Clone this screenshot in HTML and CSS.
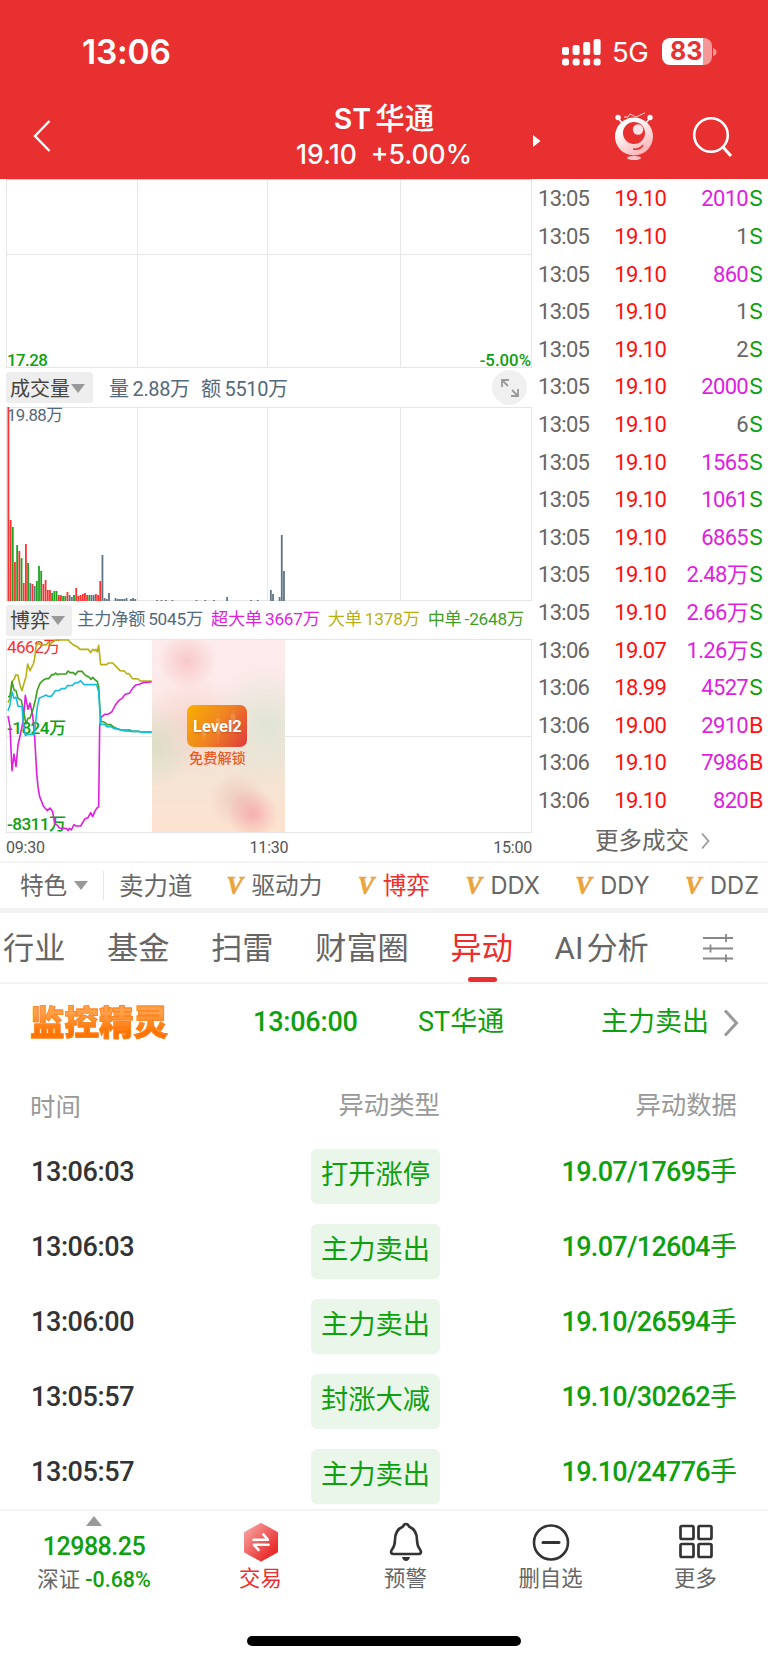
FILE: index.html
```
<!DOCTYPE html>
<html lang="zh-CN">
<head>
  <meta charset="UTF-8" />
  <meta name="viewport" content="width=device-width, initial-scale=1.0"/>
  <title>ST华通</title>
  <link rel="stylesheet" href="styles.css">
</head>
<body>
  <div class="header">
    <div class="status">
      <span class="clock">13:06</span>
      <svg class="signal" width="40" height="28" viewBox="0 0 40 28" fill="#fff">
        <rect x="0" y="9" width="7" height="8" rx="2"/><rect x="10.6" y="7" width="7" height="10" rx="2"/>
        <rect x="21.2" y="4" width="7" height="13" rx="2"/><rect x="31.6" y="1" width="7" height="16" rx="2"/>
        <rect x="0" y="20.5" width="7" height="7" rx="2.5"/><rect x="10.6" y="20.5" width="7" height="7" rx="2.5"/>
        <rect x="21.2" y="20.5" width="7" height="7" rx="2.5"/><rect x="31.6" y="20.5" width="7" height="7" rx="2.5"/>
      </svg>
      <span class="network">5G</span>
      <div class="battery"><span>83</span></div>
      <svg class="battery-tip" width="4" height="10"><path d="M0 1Q3.5 2 3.5 5T0 9Z" fill="#f49797"/></svg>
    </div>
    <div class="navbar">
      <svg class="back" width="20" height="36" viewBox="0 0 20 36"><path d="M17.500 3L3 18L17.500 33" fill="none" stroke="#fff" stroke-width="2.400"/></svg>
      <div class="title">
        <div class="name">ST<span>华通</span></div>
        <div class="quote"><span>19.10</span><span>+5.00%</span></div>
      </div>
      <svg class="next" width="8" height="12"><path d="M0 0L7.500 6L0 12Z" fill="#fff"/></svg>
      <svg class="robot" width="40" height="50" viewBox="0 0 40 50">
        <defs>
          <linearGradient id="face" x1="0" y1="0" x2=".6" y2="1"><stop offset=".3" stop-color="#fff"/><stop offset="1" stop-color="#fbb5b8"/></linearGradient>
        </defs>
        <path d="M4 6L9 12M36 6L31 12" stroke="#fff" stroke-width="1.500"/>
        <circle cx="4" cy="5.500" r="2.700" fill="#fff"/><circle cx="36" cy="5.500" r="2.700" fill="#fff"/>
        <path d="M10 5L14 5L16 2L22 5L31 .8" fill="none" stroke="#ffd0d0" stroke-width="1"/>
        <circle cx="20" cy="24.500" r="19" fill="url(#face)"/>
        <circle cx="20" cy="21" r="11" fill="#e93030"/>
        <circle cx="24" cy="17.500" r="5.200" fill="#ffe3e4"/>
        <path d="M19 37Q26 38 29 33" fill="none" stroke="#e93030" stroke-width="1.500"/>
        <ellipse cx="20" cy="46" rx="7" ry="2" fill="#fbc5c7"/>
      </svg>
      <svg class="search" width="42" height="42" viewBox="0 0 42 42" fill="none" stroke="#fff"><circle cx="19" cy="19" r="16.800" stroke-width="2.600"/><path d="M30.500 30.500L39 40" stroke-width="3"/></svg>
    </div>
  </div>

  <div class="main">
    <div class="charts">
      <div class="chart price">
        <span class="low green">17.28</span>
        <span class="low green">-5.00%</span>
      </div>
      <div class="toolbar">
        <button class="select">成交量<i></i></button>
        <span class="vol">量<b>2.88</b>万</span>
        <span class="amount">额<b>5510</b>万</span>
        <div class="expand">
          <svg width="20" height="20" viewBox="0 0 20 20" fill="none" stroke="#999" stroke-width="1.800"><path d="M2 9V2H9M2 2L8 8M18 11V18H11M18 18L12 12"/></svg>
        </div>
      </div>
      <div class="chart volume">
        <svg id="bars" width="526" height="194"></svg>
        <span>19.88万</span>
      </div>
      <div class="toolbar indicator">
        <button class="select">博弈<i></i></button>
        <span class="c1">主力净额<b>5045</b>万</span>
        <span class="c2">超大单<b>3667</b>万</span>
        <span class="c3">大单<b>1378</b>万</span>
        <span class="c4">中单<b>-2648</b>万</span>
      </div>
      <div class="chart game">
        <span class="top">4662万</span>
        <span class="mid">-1824万</span>
        <span class="bottom">-8311万</span>
        <svg class="lines" width="526" height="193" viewBox="18 27 1578 579" fill="none" stroke-width="4.800" stroke-linejoin="round">
          <polyline stroke="#b8b010" points="24,218 30,205 36,155 42,148 48,134 54,136 60,165 66,182 72,160 78,140 83,102 90,122 100,102 104,85 108,50 115,38 122,46 140,44 145,36 150,42 158,36 168,30 205,30 212,38 222,46 232,50 240,58 265,58 272,68 278,58 284,62 288,58 292,66 296,46 302,104 320,104 325,99 338,99 348,109 360,122 373,123 380,131 387,131 397,146 415,147 420,153 455,153"/>
          <polyline stroke="#e01ee0" points="24,258 30,290 36,422 42,372 48,410 54,345 64,300 70,270 76,196 84,238 90,219 98,255 104,320 110,430 114,470 119,500 130,528 142,542 150,534 158,545 164,580 172,586 178,594 200,596 204,602 208,595 214,600 222,584 228,588 242,588 255,566 264,563 272,548 278,560 284,545 290,535 296,530 299,290 303,262 314,253 326,252 336,245 346,225 356,212 366,205 376,193 388,190 398,175 406,166 420,162 432,157 445,157 455,155"/>
          <polyline stroke="#3c9f1e" points="24,200 30,200 36,155 42,180 48,182 54,205 64,211 72,250 78,282 84,265 90,264 100,235 106,210 112,180 120,160 130,150 138,146 146,146 155,134 162,134 167,129 172,134 178,132 198,132 204,123 210,128 220,128 226,134 234,124 246,124 252,132 258,137 268,142 272,148 278,142 284,148 292,155 296,170 300,240 302,274 312,276 322,284 332,284 342,292 352,296 362,300 390,300 396,304 415,304 422,306 455,306"/>
          <polyline stroke="#14bede" points="24,242 30,225 36,185 42,205 48,202 54,228 66,230 70,280 76,317 84,313 102,313 106,285 112,230 118,204 128,200 138,195 144,199 154,199 166,182 178,181 184,176 196,176 202,167 218,166 224,159 234,158 242,152 252,164 290,164 296,185 300,250 302,283 314,283 320,290 332,290 342,296 358,298 368,302 395,304 415,304 425,307 455,307"/>
        </svg>
        <div class="lock">
          <div class="level">
            <svg width="60" height="43"><path d="M17 17V36M31 8V38M46 5V25M15 24H19V30H15ZM29 14H33V28H29ZM44 10H48V20H44Z" stroke="#fff" stroke-opacity=".12" fill="#fff" fill-opacity=".1"/></svg>
            <span>Level2</span>
          </div>
          <p>免费解锁</p>
        </div>
      </div>
      <div class="axis"><span>09:30</span><span>11:30</span><span>15:00</span></div>
    </div>

    <div class="trades">
      <div id="tradeList"></div>
      <div class="more">更多成交<svg width="9" height="18" viewBox="0 0 9 18"><path d="M1 1.500L7.500 9L1 16.500" fill="none" stroke="#999" stroke-width="1.800"/></svg></div>
    </div>
  </div>

  <div class="features">
    <div class="kind">特色<i></i></div>
    <span class="plain">卖力道</span>
    <span><em>V</em>驱动力</span>
    <span class="on"><em>V</em>博弈</span>
    <span><em>V</em>DDX</span>
    <span><em>V</em>DDY</span>
    <span><em>V</em>DDZ</span>
  </div>

  <div class="tabs">
    <span>行业</span>
    <span>基金</span>
    <span>扫雷</span>
    <span>财富圈</span>
    <span class="on">异动</span>
    <span>AI<u>分析</u></span>
    <svg width="31" height="28" viewBox="0 0 31 28" stroke="#888" stroke-width="1.800"><path d="M0 4H30M0 14.500H30M0 24.500H30M23 0V8M7.500 10.500V18.500M23 20.500V28"/></svg>
  </div>

  <div class="monitor">
    <strong>监控精灵</strong>
    <span class="time">13:06:00</span>
    <span class="stock">ST华通</span>
    <span class="event">主力卖出</span>
    <svg width="16" height="28" viewBox="0 0 16 28"><path d="M2 1.500L13.500 14L2 26.500" fill="none" stroke="#999" stroke-width="3"/></svg>
  </div>

  <div class="moves">
    <div class="move-head"><span>时间</span><span>异动类型</span><span>异动数据</span></div>
    <div id="moveList"></div>
  </div>

  <div class="footer">
    <div class="item index">
      <i></i>
      <b>12988.25</b>
      <p>深证 <span>-0.68%</span></p>
    </div>
    <div class="item on">
      <svg width="40" height="40" viewBox="0 0 40 40">
        <defs><linearGradient id="hex" x1="0" y1="0" x2="1" y2="1"><stop offset="0" stop-color="#f9a9a6"/><stop offset=".8" stop-color="#e93030"/></linearGradient></defs>
        <path d="M20 2.500L35.500 11V29.500L20 38L4.500 29.500V11Z" fill="url(#hex)" stroke="url(#hex)" stroke-width="3" stroke-linejoin="round"/>
        <path d="M12.500 17.800H27L22.500 12.500M27.500 22.800H13L17.500 28" fill="none" stroke="#fff" stroke-width="2.600" stroke-linecap="round" stroke-linejoin="round"/>
      </svg>
      <p>交易</p>
    </div>
    <div class="item">
      <svg width="40" height="40" viewBox="0 0 40 40">
        <path d="M20 2Q22 2 23 4.500C29 7 31 12 31 18C31 23 32 25 34 27.500C36 30.500 34.500 32 32.500 32H7.500C5.500 32 4 30.500 6 27.500C8 25 9 23 9 18C9 12 11 7 17 4.500Q18 2 20 2Z" fill="none" stroke="#333" stroke-width="2.600" stroke-linejoin="round"/>
        <path d="M16 35H24Q23 39 20 39T16 35Z" fill="#333"/>
      </svg>
      <p>预警</p>
    </div>
    <div class="item">
      <svg width="40" height="40" viewBox="0 0 40 40" fill="none" stroke="#333"><circle cx="20" cy="20.500" r="17" stroke-width="2.600"/><path d="M12 20.500H28" stroke-width="3" stroke-linecap="round"/></svg>
      <p>删自选</p>
    </div>
    <div class="item">
      <svg width="40" height="40" viewBox="0 0 40 40" fill="none" stroke="#333" stroke-width="2.700"><rect x="4.500" y="4" width="13" height="13" rx="1.500"/><rect x="22.500" y="4" width="13" height="13" rx="1.500"/><rect x="4.500" y="22" width="13" height="13" rx="1.500"/><rect x="22.500" y="22" width="13" height="13" rx="1.500"/></svg>
      <p>更多</p>
    </div>
  </div>
  <div class="home"></div>

  <script>
    const trades = [
      ['13:05', '19.10', '2010', 'S'],
      ['13:05', '19.10', '1', 'S'],
      ['13:05', '19.10', '860', 'S'],
      ['13:05', '19.10', '1', 'S'],
      ['13:05', '19.10', '2', 'S'],
      ['13:05', '19.10', '2000', 'S'],
      ['13:05', '19.10', '6', 'S'],
      ['13:05', '19.10', '1565', 'S'],
      ['13:05', '19.10', '1061', 'S'],
      ['13:05', '19.10', '6865', 'S'],
      ['13:05', '19.10', '2.48万', 'S'],
      ['13:05', '19.10', '2.66万', 'S'],
      ['13:06', '19.07', '1.26万', 'S'],
      ['13:06', '18.99', '4527', 'S'],
      ['13:06', '19.00', '2910', 'B'],
      ['13:06', '19.10', '7986', 'B'],
      ['13:06', '19.10', '820', 'B']
    ];

    const moves = [
      ['13:06:03', '打开涨停', '19.07/17695'],
      ['13:06:03', '主力卖出', '19.07/12604'],
      ['13:06:00', '主力卖出', '19.10/26594'],
      ['13:05:57', '封涨大减', '19.10/30262'],
      ['13:05:57', '主力卖出', '19.10/24776']
    ];

    // minute index, height, colour
    const volume = `0 194 r,1 81 r,2 74 g,3 39 r,4 56 g,5 50 r,6 43 g,7 18 r,8 57 r,9 38 g,10 18 b,11 17 r,12 15 b,
      13 20 g,14 35 g,15 30 g,16 17 r,17 21 r,18 11 r,19 11 r,20 8 g,21 10 g,22 10 g,23 6 r,24 6 r,25 5 g,26 5 g,
      27 9 r,28 6 b,29 4 b,30 6 g,31 13 r,32 5 r,33 6 r,34 7 r,35 8 r,36 6 r,37 6 g,38 6 b,39 6 b,40 7 r,41 6 r,
      42 20 r,43 46 b,44 3 b,45 2 b,46 8 b,49 3 b,50 2 b,51 2 b,52 2 b,53 2 b,54 3 b,56 2 b,57 3 b,58 2 b,
      68 1 b,70 1 b,72 1 b,75 1 b,86 1 b,90 1 b,94 1 b,100 4 b,111 1 b,114 1 b,120 11 b,121 7 b,124 4 b,125 66 b,126 30 b`;
    const colors = { r: '#ff3030', g: '#1fa31f', b: '#5f7485' };

    document.getElementById('bars').innerHTML = volume.split(',').map(item => {
      const [i, h, c] = item.trim().split(' ');
      return `<rect x="${(1.5 + i * 2.187).toFixed(2)}" y="${194 - h}" width="1.8" height="${h}" fill="${colors[c]}"/>`;
    }).join('');

    document.getElementById('tradeList').innerHTML = trades.map(([time, price, num, side]) => {
      const big = num.length > 2 ? 'big' : '';
      return `<div class="trade"><span>${time}</span><span class="price">${price}</span><span class="num ${big}">${num}</span><span class="side ${side}">${side}</span></div>`;
    }).join('');

    document.getElementById('moveList').innerHTML = moves.map(([time, type, data]) =>
      `<div class="move"><span class="time">${time}</span><span class="type">${type}</span><span class="data">${data}<u>手</u></span></div>`
    ).join('');
  </script>
</body>
</html>
```
FILE: styles.css
```
* {
  box-sizing: border-box;
}

body {
  margin: 0;
  width: 768px;
  height: 1663px;
  overflow: hidden;
  background: #fff;
  color: #666;
  font-family: Roboto, "Noto Sans CJK SC", sans-serif;
}

p {
  margin: 0;
}

i, em, u {
  font-style: normal;
  text-decoration: none;
}

svg {
  display: block;
  flex: none;
}

.green {
  color: #0fa00f;
}

/* header */
.header {
  height: 179px;
  background: #e93030;
  color: #fff;
  font-family: Inter, "Noto Sans CJK SC", sans-serif;
}

.status {
  display: flex;
  align-items: center;
  height: 103px;
  padding-left: 82px;
}

.clock {
  width: 480px;
  font-size: 33.500px;
  font-weight: 600;
  letter-spacing: -0.2px;
}

.network {
  width: 48px;
  margin-left: 10px;
  font-size: 27.500px;
  letter-spacing: -0.5px;
}

.battery {
  width: 50px;
  height: 27px;
  margin-left: 2px;
  border-radius: 8px;
  background: linear-gradient(90deg, #fff 41px, #f49797 41px);
  color: #e93030;
  font-size: 25px;
  font-weight: 700;
  line-height: 27px;
  padding-left: 8px;
}

.battery-tip {
  margin-left: 1px;
}

.navbar {
  display: flex;
  height: 76px;
}

.back {
  margin: 15px 0 0 32px;
}

.title {
  width: 264px;
  margin: -2px 0 0 200px;
  text-align: center;
}

.name {
  height: 34px;
  line-height: 34px;
  font-size: 28.500px;
  font-weight: 600;
}

.name span {
  margin-left: 4px;
  font-size: 29.500px;
  font-weight: 500;
}

.quote {
  display: flex;
  justify-content: center;
  gap: 14px;
  line-height: 38px;
  font-size: 26.500px;
  font-weight: 500;
}

.next {
  margin: 32px 0 0 17px;
}

.robot {
  margin: 9px 0 0 73px;
}

.search {
  margin: 13px 0 0 38px;
}

/* charts */
.main {
  display: flex;
  height: 682px;
}

.charts {
  width: 532px;
  padding-left: 6px;
}

.chart {
  position: relative;
  width: 526px;
  border: 1px solid #e6e6e6;
  background: linear-gradient(90deg, transparent 130px, #e6e6e6 130px, #e6e6e6 131px, transparent 131px, transparent 260px, #e6e6e6 260px, #e6e6e6 261px, transparent 261px, transparent 393px, #e6e6e6 393px, #e6e6e6 394px, transparent 394px);
}

.price.chart {
  display: flex;
  justify-content: space-between;
  align-items: flex-end;
  height: 189px;
  border-top-color: #f3c0c0;
}

.price.chart::before {
  content: "";
  position: absolute;
  top: 74px;
  left: 0;
  width: 100%;
  height: 1px;
  background: #e6e6e6;
}

.low {
  font-size: 16.800px;
  font-weight: 500;
  line-height: 13px;
  letter-spacing: -0.5px;
}

.low + .low {
  letter-spacing: 0;
}

.toolbar {
  display: flex;
  align-items: center;
  height: 39px;
  color: #54697b;
  font-size: 20px;
}

.toolbar b {
  font-weight: 400;
  margin-left: 4px;
}

.toolbar > span {
  letter-spacing: -0.4px;
}

.select {
  display: flex;
  align-items: center;
  width: 87px;
  height: 31px;
  padding: 0 0 1px 4px;
  border: none;
  border-radius: 3px;
  background: #eee;
  color: #444;
  font-family: inherit;
  font-size: 20px;
}

.select i {
  margin: 2px 0 0 1px;
  border: 7px solid transparent;
  border-top: 9px solid #999;
  border-bottom: 0;
}

.vol {
  width: 92px;
  margin-left: 16px;
}

.expand {
  display: flex;
  align-items: center;
  justify-content: center;
  width: 35px;
  height: 35px;
  margin: 0 5px 0 auto;
  border-radius: 50%;
  background: #f0f0f0;
}

.volume {
  height: 194px;
}

.volume svg, .lines {
  position: absolute;
  left: -1px;
  top: -1px;
}

.volume span {
  position: absolute;
  left: 0;
  top: -1px;
  color: #54697b;
  font-size: 16.800px;
  line-height: 17px;
  letter-spacing: -0.6px;
}

.indicator {
  height: 38px;
  font-size: 17.200px;
}

.indicator > span {
  margin: 0 8px 5px 0;
  white-space: nowrap;
  letter-spacing: -0.2px;
}

.indicator .select {
  width: 67px;
}

.indicator b {
  margin-left: 3px;
}

.indicator .c1 {
  margin-left: 5px;
}

.c2 {
  color: #e01ee0;
}

.c3 {
  color: #b8b010;
}

.c4 {
  color: #3c9f1e;
}

.game {
  height: 194px;
  background: linear-gradient(transparent 96px, #e6e6e6 96px, #e6e6e6 97px, transparent 97px);
}

.game > span {
  position: absolute;
  left: 0;
  color: #0fa00f;
  font-size: 17.200px;
  font-weight: 500;
  line-height: 18px;
  letter-spacing: -0.6px;
}

.game .top {
  top: -2px;
  color: #ff2d2d;
  font-weight: 400;
}

.game .mid {
  top: 79px;
}

.game .bottom {
  bottom: -1px;
}

.lock {
  position: absolute;
  left: 145px;
  top: 0;
  width: 133px;
  height: 192px;
  padding-top: 65px;
  background:
    radial-gradient(circle at 35px 21px, rgba(247, 190, 190, .75), rgba(247, 190, 190, .4) 14px, rgba(247, 190, 190, 0) 29px),
    radial-gradient(circle at 101px 174px, rgba(245, 160, 165, .75), rgba(245, 160, 165, .35) 13px, rgba(245, 160, 165, 0) 25px),
    radial-gradient(circle at 86px 160px, rgba(228, 180, 165, .5), rgba(228, 180, 165, 0) 28px),
    radial-gradient(circle at 0 105px, rgba(213, 221, 196, .8), rgba(213, 221, 196, 0) 42px),
    radial-gradient(circle at 114px 85px, rgba(218, 228, 210, .8), rgba(218, 228, 210, 0) 58px),
    radial-gradient(circle at 40px 85px, rgba(246, 200, 190, .6), rgba(246, 200, 190, 0) 50px),
    linear-gradient(#fdeaea 25%, #f3e4d6 65%, #fde2cf);
}

.level {
  position: relative;
  width: 60px;
  height: 42px;
  margin: 0 auto 1px 35px;
  border-radius: 7px;
  background: linear-gradient(125deg, #f9b000, #f08322 50%, #de3a3e);
}

.level span {
  position: absolute;
  left: 6px;
  top: 11px;
  color: #fff;
  font-size: 16.500px;
  font-weight: 700;
  line-height: 22px;
  text-shadow: 0 1px 2px rgba(160, 60, 0, .5);
}

.lock p {
  margin-left: 37px;
  color: #ec5a24;
  font-size: 14.200px;
  font-weight: 500;
  line-height: 20px;
}

.axis {
  display: flex;
  justify-content: space-between;
  width: 526px;
  padding-top: 3px;
  color: #555;
  font-size: 16px;
  line-height: 23px;
  letter-spacing: -0.2px;
}

/* trades */
.trades {
  flex: 1;
}

.trade {
  display: flex;
  align-items: center;
  height: 37.620px;
  padding: 3px 4px 0 6px;
  font-size: 22px;
  line-height: 26px;
  letter-spacing: -0.7px;
}

.trade span {
  height: 26px;
}

.trade .price {
  margin-left: 25px;
  color: #ff1010;
}

.trade .num {
  flex: 1;
  text-align: right;
}

.trade .big {
  color: #e01ee0;
}

.trade .side {
  width: 15px;
  margin-left: 1px;
  font-family: Inter, sans-serif;
  font-size: 22px;
  line-height: 24px;
}

.S {
  color: #0fa00f;
}

.B {
  color: #ff1010;
}

.more {
  display: flex;
  align-items: center;
  gap: 12px;
  padding: 6px 0 0 63px;
  font-size: 23.500px;
  line-height: 34px;
}

/* feature bar */
.features {
  display: flex;
  align-items: center;
  height: 52px;
  border-top: 2px solid #f3f3f3;
  border-bottom: 5px solid #f3f3f3;
  overflow: hidden;
  font-family: Inter, "Noto Sans CJK SC", sans-serif;
  font-size: 23.600px;
  line-height: 36px;
  white-space: nowrap;
}

.features span {
  flex: none;
  margin-right: 35.500px;
}

.kind {
  display: flex;
  flex: none;
  align-items: center;
  width: 104px;
  height: 29px;
  padding-left: 20px;
  border-right: 1px solid #e6e6e6;
}

.kind i {
  margin-left: 7px;
  border: 7px solid transparent;
  border-top: 9px solid #999;
  border-bottom: 0;
}

.features .plain {
  margin-left: 15px;
  margin-right: 34px;
  font-size: 24.500px;
}

.features em {
  display: inline-block;
  width: 25px;
  color: #eba43c;
  font-family: "Liberation Serif", serif;
  font-size: 25px;
  font-weight: 700;
  font-style: italic;
  line-height: 30px;
  -webkit-text-stroke: 0.6px #eba43c;
}

.on, .features .on {
  color: #f02d2d;
}

/* tabs */
.tabs {
  display: flex;
  align-items: center;
  gap: 41.700px;
  height: 71px;
  padding: 0 0 4px 3px;
  border-bottom: 2px solid #f3f3f3;
  font-size: 31.200px;
  white-space: nowrap;
}

.tabs span {
  position: relative;
}

.tabs u {
  margin-left: 3px;
}

.tabs svg {
  margin: 5px 0 0 13px;
}

.tabs .on::after {
  content: "";
  position: absolute;
  left: 17px;
  bottom: -14px;
  width: 29px;
  height: 5px;
  border-radius: 3px;
  background: #e93030;
}

/* monitor */
.monitor {
  display: flex;
  align-items: center;
  height: 77px;
  padding-left: 30px;
  color: #0fa00f;
  font-size: 27px;
}

.monitor span {
  margin-bottom: 1px;
  line-height: 38px;
}

.monitor strong {
  width: 223px;
  padding-top: 1px;
  background: linear-gradient(#ffa04a 30%, #ff7300 70%);
  background-clip: text;
  -webkit-background-clip: text;
  -webkit-text-stroke: 0.8px #ff8420;
  color: transparent;
  font-size: 34.500px;
  font-weight: 900;
  line-height: 44px;
}

.monitor .time {
  width: 165px;
  font-weight: 500;
  letter-spacing: -0.2px;
}

.monitor .stock {
  width: 183px;
}

.monitor .event {
  width: 122px;
}

/* moves */
.moves {
  height: 448px;
  padding: 0 31px 0 30px;
}

.move-head, .move {
  display: grid;
  grid-template-columns: 200px 210px 1fr;
}

.move-head {
  height: 88px;
  padding-top: 26px;
  color: #999;
  font-size: 25.400px;
}

.move-head span + span {
  margin-top: -2px;
}

.move-head span + span, .data {
  text-align: right;
}

.move {
  height: 75px;
  font-size: 27px;
}

.move .time {
  padding-left: 1px;
  color: #333;
  font-weight: 500;
  line-height: 46px;
  letter-spacing: -0.4px;
}

.type {
  justify-self: end;
  width: 129px;
  height: 55px;
  border-radius: 6px;
  background: #eaf6ea;
  color: #0fa00f;
  font-size: 27.300px;
  line-height: 53px;
  text-align: center;
}

.data {
  color: #0fa00f;
  line-height: 46px;
  font-weight: 500;
  letter-spacing: -0.7px;
}

.data u {
  font-weight: 400;
  letter-spacing: 0;
}

/* footer */
.footer {
  display: flex;
  height: 127px;
  border-top: 2px solid #f3f3f3;
}

.item {
  width: 145px;
  padding-top: 11px;
  text-align: center;
}

.item svg {
  margin: 0 auto;
}

.item p {
  font-size: 21.400px;
  line-height: 34px;
}

.item.index {
  width: 188px;
  padding-top: 5px;
}

.index i {
  display: block;
  width: 16px;
  margin: 0 auto;
  border: 8px solid transparent;
  border-bottom: 10px solid #999;
  border-top: 0;
}

.index b {
  display: block;
  color: #0fa00f;
  font-size: 25px;
  font-weight: 500;
  line-height: 41px;
  letter-spacing: -0.5px;
}

.index p {
  line-height: 25px;
}

.index span {
  color: #0fa00f;
  font-weight: 500;
}

.home {
  width: 274px;
  height: 10px;
  margin-left: 247px;
  border-radius: 5px;
  background: #000;
}
```
